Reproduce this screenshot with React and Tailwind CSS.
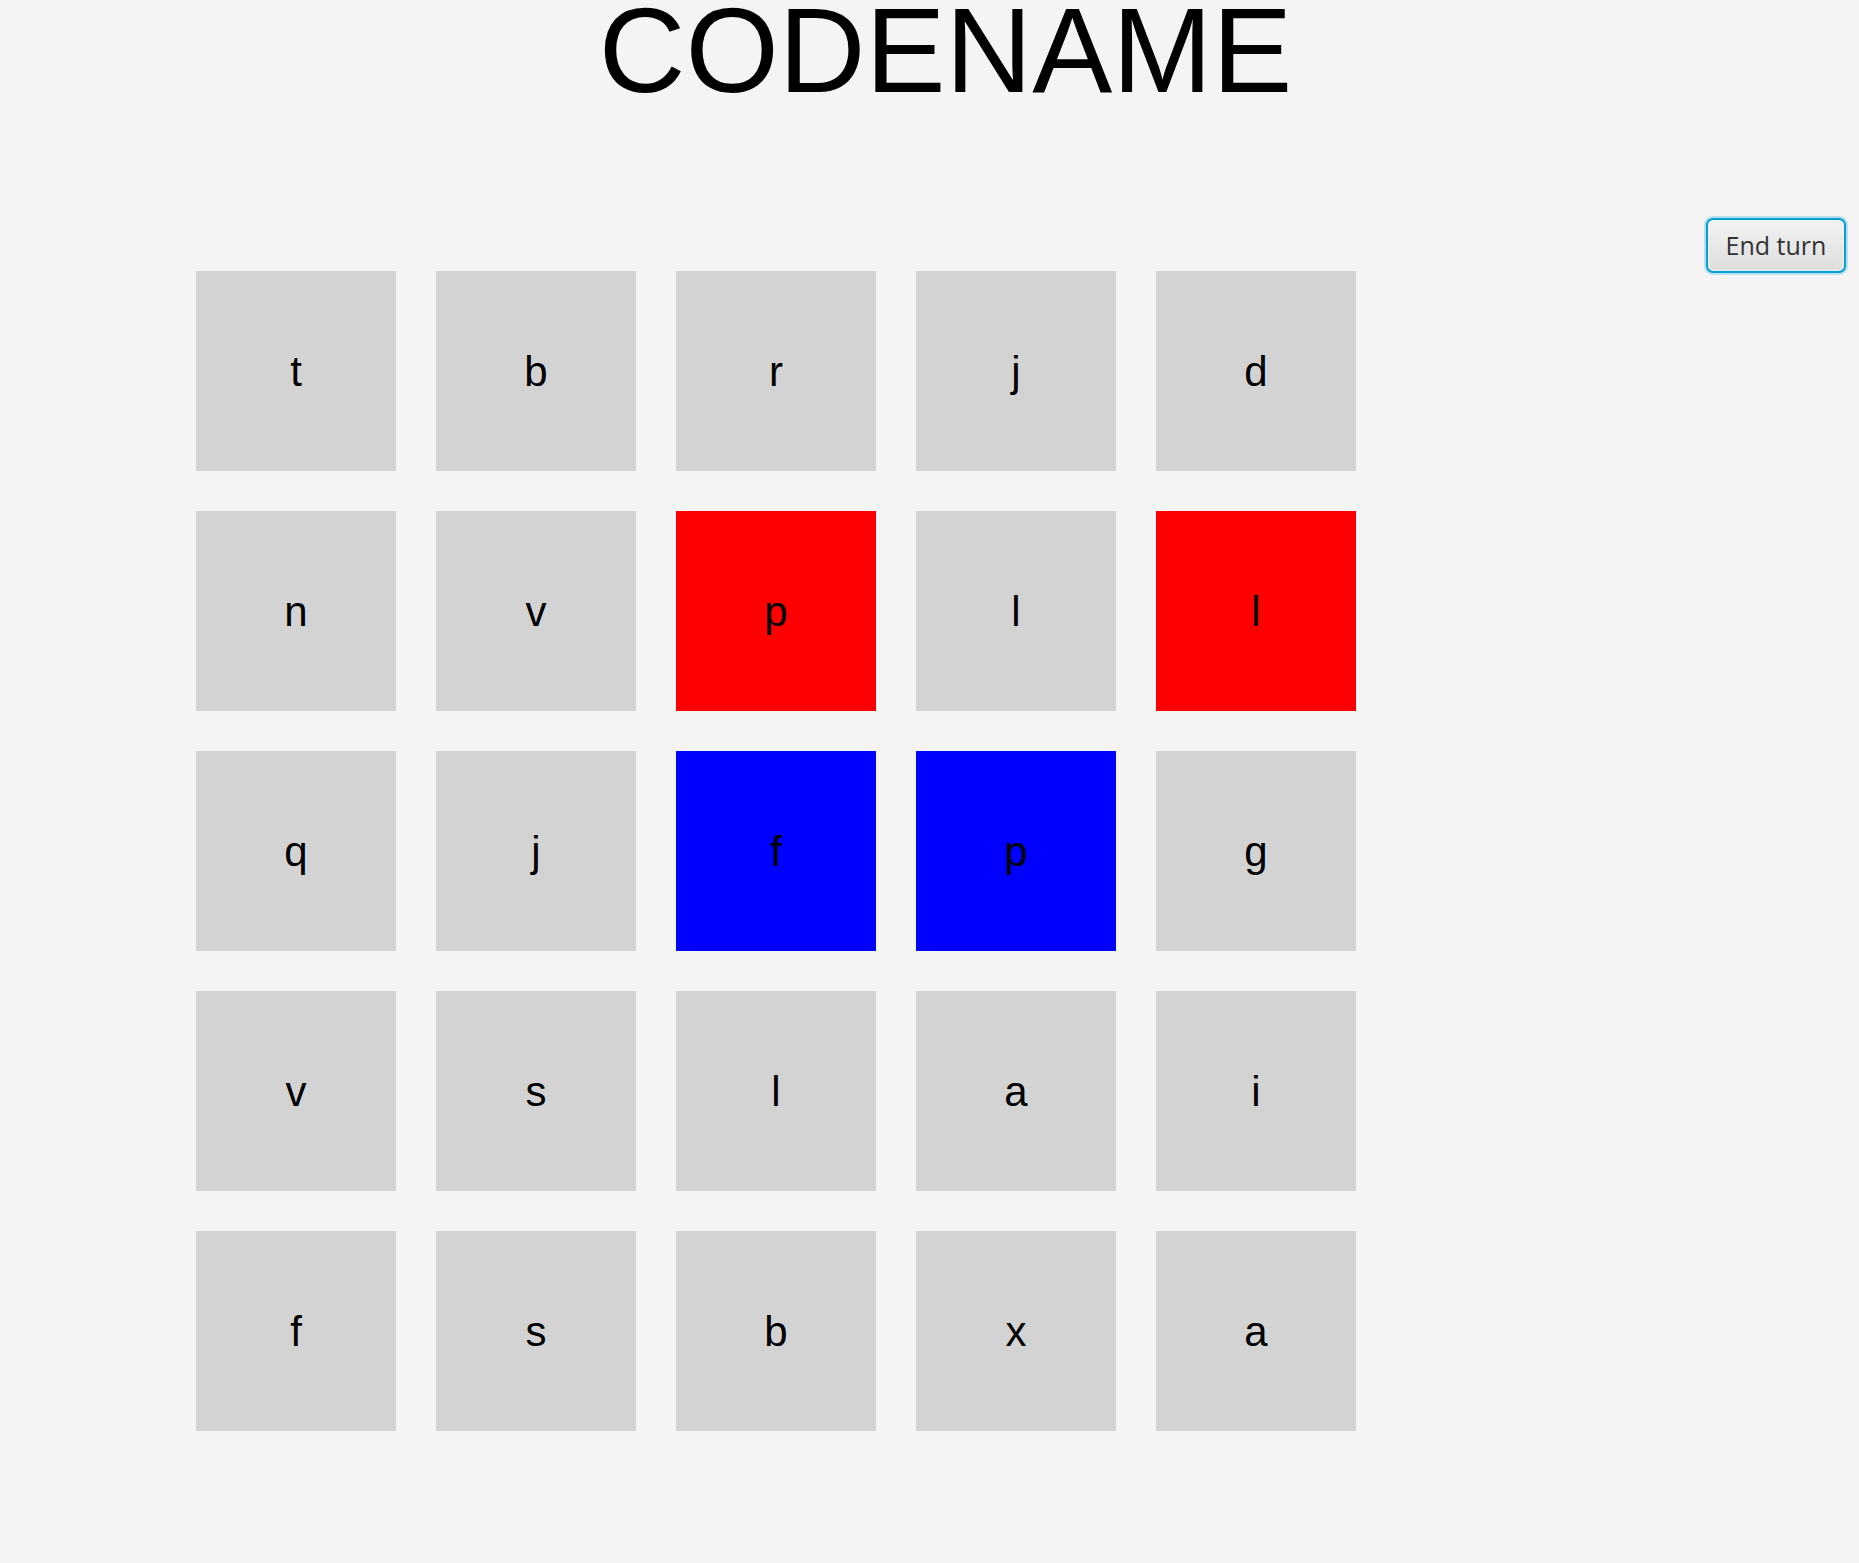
const rows = [
  [["t"], ["b"], ["r"], ["j"], ["d"]],
  [["n"], ["v"], ["p", "red"], ["l"], ["l", "red"]],
  [["q"], ["j"], ["f", "blue"], ["p", "blue"], ["g"]],
  [["v"], ["s"], ["l"], ["a"], ["i"]],
  [["f"], ["s"], ["b"], ["x"], ["a"]],
];

function Tile({ letter, color }) {
  const bg =
    color === "red" ? "bg-[#ff0000]" : color === "blue" ? "bg-[#0000ff]" : "bg-[#d3d3d3]";
  return (
    <div className={`w-[200px] h-[200px] flex items-center justify-center ${bg}`}>
      <span className="text-[42px] text-black font-['Liberation_Sans',Arial,sans-serif]">
        {letter}
      </span>
    </div>
  );
}

export default function App() {
  return (
    <div className="min-h-screen bg-[#f4f4f4] font-['Liberation_Sans',Arial,sans-serif] overflow-hidden">
      <div className="h-[218px] flex justify-center items-start pl-[32px]">
        <h1 className="text-[120px] leading-[100px] text-black font-normal">CODENAME</h1>
      </div>
      <div className="h-[53px] flex justify-end items-start pr-[13px]">
        <button className="w-[140px] h-[55px] rounded-[7px] border-2 border-[#039ed3] shadow-[0_0_0_2px_rgba(3,158,211,0.25)] p-[1px] bg-[#e8f4fa]">
          <span className="flex w-full h-full items-center justify-center rounded-[4px] bg-gradient-to-b from-[#f2f2f2] to-[#dedede] text-[#333333] text-[25px] font-['Open_Sans',sans-serif]">
            End turn
          </span>
        </button>
      </div>
      <div className="pl-[196px] grid grid-cols-[repeat(5,200px)] gap-[40px]">
        {rows.flat().map(([l, c], i) => (
          <Tile key={i} letter={l} color={c} />
        ))}
      </div>
    </div>
  );
}
